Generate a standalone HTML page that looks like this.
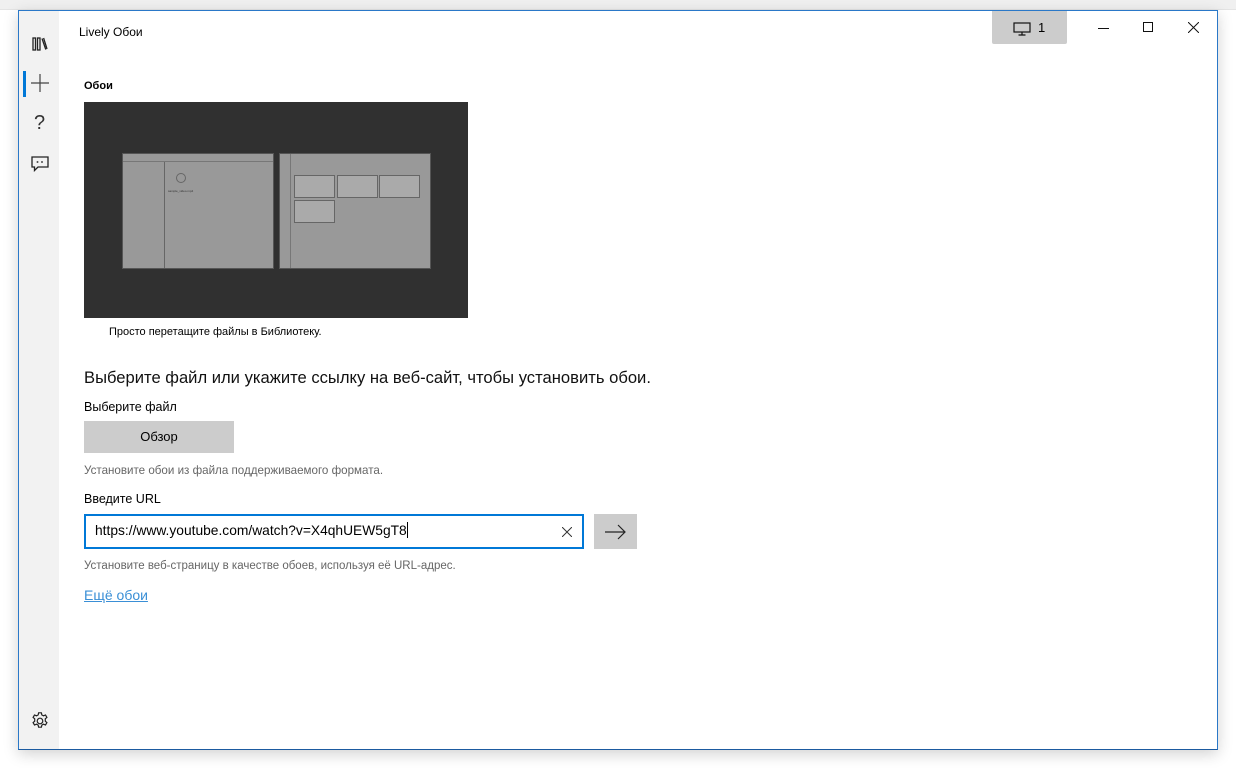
<!DOCTYPE html>
<html><head><meta charset="utf-8"><style>
*{margin:0;padding:0;box-sizing:border-box}
body{width:1236px;height:768px;background:#fff;position:relative;overflow:hidden;font-family:"Liberation Sans","DejaVu Sans",sans-serif;color:#000}
.topbar{position:absolute;left:0;top:0;width:1236px;height:10px;background:#f0f0f0;border-bottom:1px solid #e4e4e4}
.win{position:absolute;left:18px;top:10px;width:1200px;height:740px;background:#fff;border:1px solid #2a78c8;border-bottom-color:#1b5aa0;box-shadow:0 4px 14px rgba(0,0,0,.18)}
.side{position:absolute;left:0;top:0;width:40px;height:738px;background:#f2f2f2}
.abs{position:absolute}
.t{position:absolute;white-space:nowrap}
</style></head><body>
<div class="topbar"></div>
<div class="win">
 <div class="side"></div>
 <svg class="abs" style="left:13px;top:26px" width="16" height="14" viewBox="0 0 16 14" fill="none" stroke="#222" stroke-width="1.3"><rect x="1" y="1" width="2.5" height="12"/><rect x="5.5" y="1" width="2.5" height="12"/><path d="M10 1.5 L13.8 12.5"/><path d="M11.6 1 L15 12"/></svg>
 <div class="abs" style="left:4px;top:60px;width:3px;height:26px;background:#0078d7"></div>
 <svg class="abs" style="left:12px;top:63px" width="18" height="18" viewBox="0 0 18 18" stroke="#444" stroke-width="1.2"><path d="M9 0V18M0 9H18"/></svg>
 <div class="t" style="left:15px;top:101px;font-size:20px;color:#333;font-weight:300">?</div>
 <svg class="abs" style="left:12px;top:145px" width="18" height="16" viewBox="0 0 18 16" fill="none" stroke="#222" stroke-width="1.3"><path d="M1 1H17V11H7L3.5 14.5V11H1Z"/><path d="M6.5 5.2V6.8M11 5.2V6.8" stroke-width="1.6"/></svg>
 <svg class="abs" style="left:12px;top:701px" width="18" height="18" viewBox="0 0 18 18" fill="none" stroke="#222" stroke-width="1.2"><circle cx="9" cy="9" r="2.8"/><path d="M7.6 0.8h2.8l.4 2.1 1.7.9 2-.8 1.4 2.4-1.6 1.4v2.4l1.6 1.4-1.4 2.4-2-.8-1.7.9-.4 2.1H7.6l-.4-2.1-1.7-.9-2 .8-1.4-2.4 1.6-1.4V6.8L2.1 5.4l1.4-2.4 2 .8 1.7-.9z"/></svg>

 <div class="t" style="left:60px;top:14px;font-size:12px">Lively Обои</div>
 <div class="abs" style="left:973px;top:0;width:75px;height:33px;background:#cccccc;border-radius:0 0 2px 2px"></div>
 <svg class="abs" style="left:994px;top:11px" width="18" height="14" viewBox="0 0 18 14" fill="none" stroke="#111" stroke-width="1.2"><rect x="1" y="1" width="16" height="9"/><path d="M9 10V13M5.5 13H12.5"/></svg>
 <div class="t" style="left:1019px;top:9px;font-size:13px">1</div>
 <div class="abs" style="left:1079px;top:17px;width:11px;height:1px;background:#111"></div>
 <div class="abs" style="left:1124px;top:11px;width:10px;height:10px;border:1px solid #111"></div>
 <svg class="abs" style="left:1169px;top:11px" width="11" height="11" viewBox="0 0 11 11" stroke="#111" stroke-width="1"><path d="M0 0L11 11M11 0L0 11"/></svg>

 <div class="t" style="left:65px;top:69px;font-size:11px;font-weight:bold">Обои</div>
 <div class="abs" style="left:65px;top:91px;width:384px;height:216px;background:#303030">
  <div class="abs" style="left:38px;top:51px;width:152px;height:116px;background:#999;border:1px solid #555">
   <div class="abs" style="left:0;top:7px;width:150px;height:1px;background:#777"></div>
   <div class="abs" style="left:41px;top:8px;width:1px;height:106px;background:#666"></div>
   <div class="abs" style="left:53px;top:19px;width:10px;height:10px;border:1px solid #666;border-radius:50%"></div>
   <div class="t" style="left:45px;top:35px;font-size:3px;color:#333">sample_video.mp4</div>
  </div>
  <div class="abs" style="left:195px;top:51px;width:152px;height:116px;background:#999;border:1px solid #555">
   <div class="abs" style="left:10px;top:0;width:1px;height:114px;background:#777"></div>
   <div class="abs" style="left:14px;top:21px;width:41px;height:23px;border:1px solid #666;background:#aaa"></div>
   <div class="abs" style="left:57px;top:21px;width:41px;height:23px;border:1px solid #666;background:#aaa"></div>
   <div class="abs" style="left:99px;top:21px;width:41px;height:23px;border:1px solid #666;background:#aaa"></div>
   <div class="abs" style="left:14px;top:46px;width:41px;height:23px;border:1px solid #666;background:#aaa"></div>
  </div>
 </div>
 <div class="t" style="left:90px;top:315px;font-size:11px">Просто перетащите файлы в Библиотеку.</div>

 <div class="t" style="left:65px;top:357px;font-size:16.6px;color:#111">Выберите файл или укажите ссылку на веб-сайт, чтобы установить обои.</div>
 <div class="t" style="left:65px;top:389px;font-size:12.5px">Выберите файл</div>
 <div class="abs" style="left:65px;top:410px;width:150px;height:32px;background:#cccccc;text-align:center;line-height:32px;font-size:13px">Обзор</div>
 <div class="t" style="left:65px;top:453px;font-size:11.6px;color:#666">Установите обои из файла поддерживаемого формата.</div>
 <div class="t" style="left:65px;top:481px;font-size:12.5px">Введите URL</div>
 <div class="abs" style="left:65px;top:503px;width:500px;height:35px;border:2px solid #0078d7;background:#fff"></div>
 <div class="t" style="left:76px;top:511px;font-size:13.8px">https://www.youtube.com/watch?v=X4qhUEW5gT8<span style="display:inline-block;width:1px;height:16px;background:#000;vertical-align:-3px"></span></div>
 <svg class="abs" style="left:543px;top:516px" width="10" height="10" viewBox="0 0 10 10" stroke="#333" stroke-width="1"><path d="M0 0L10 10M10 0L0 10"/></svg>
 <div class="abs" style="left:575px;top:503px;width:43px;height:35px;background:#cccccc"></div>
 <svg class="abs" style="left:586px;top:513px" width="21" height="16" viewBox="0 0 21 16" fill="none" stroke="#222" stroke-width="1.2"><path d="M0 8H20M13 1L20 8L13 15"/></svg>
 <div class="t" style="left:65px;top:549px;font-size:11.5px;color:#666">Установите веб-страницу в качестве обоев, используя её URL-адрес.</div>
 <div class="t" style="left:65px;top:576px;font-size:14px;color:#3a8fd6;text-decoration:underline">Ещё обои</div>
</div>
</body></html>
